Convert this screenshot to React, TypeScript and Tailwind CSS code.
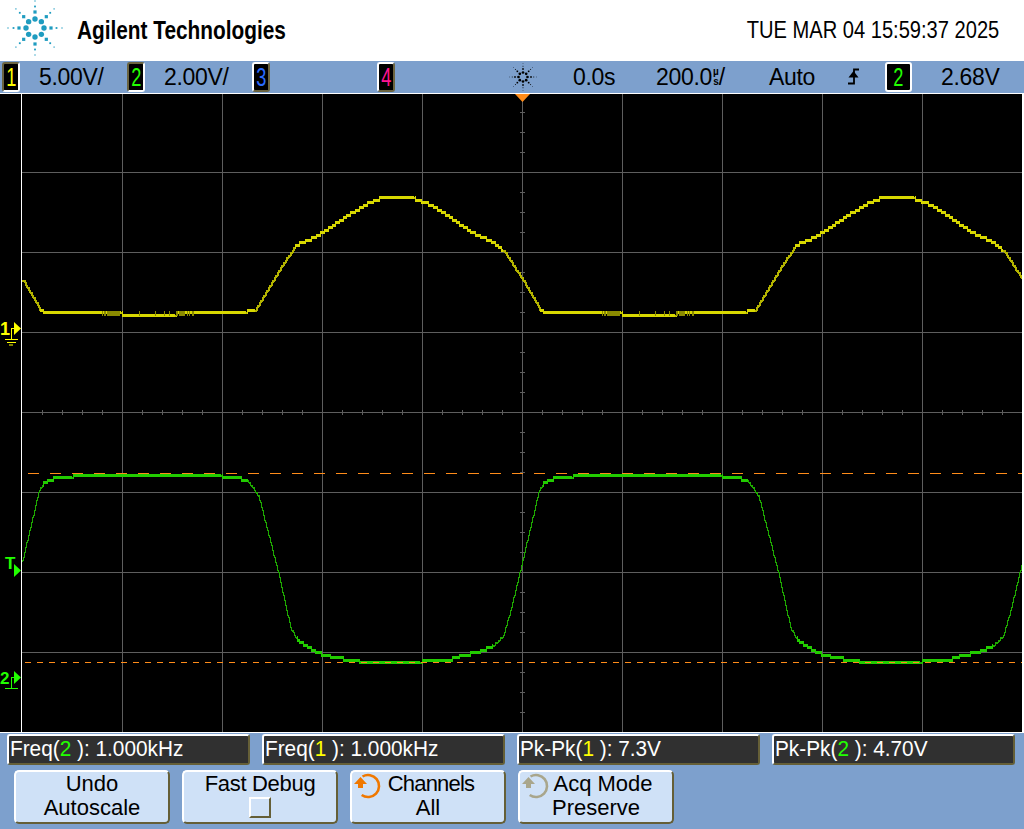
import React from "react";

// period of both traces is 500px (1 kHz at 200us/div)
const yellowPts: [number, number][] = [
  [0, 279], [18, 310], [26, 312], [99, 312], [100, 315], [153, 315], [154, 312], [224, 312], [225, 310], [233, 309],
  [258, 267], [273, 245], [291, 237], [300, 232], [325, 215], [345, 203], [360, 197], [392, 197], [393, 199], [408, 204], [428, 217],
  [448, 231], [471, 242], [481, 250], [500, 279],
];
const greenPts: [number, number][] = [
  [0, 560], [16, 492], [21, 482], [24, 481], [31, 478], [50, 476], [51, 475], [199, 475], [200, 477], [218, 478], [226, 481],
  [236, 495], [256, 573], [268, 627], [275, 640], [291, 650], [303, 655], [315, 657], [328, 660], [350, 662], [398, 662], [400, 660],
  [425, 660], [438, 655], [455, 652], [471, 645], [481, 635], [488, 610], [500, 560],
];

function traceAt(pts: [number, number][], x: number) {
  const px = ((x - 22) % 500 + 500) % 500;
  for (let i = 1; i < pts.length; i++) {
    if (px <= pts[i][0]) {
      const [x0, y0] = pts[i - 1];
      const [x1, y1] = pts[i];
      return y0 + ((y1 - y0) * (px - x0)) / (x1 - x0 || 1);
    }
  }
  return pts[0][1];
}

// the scope samples on a coarse vertical grid, hence the stair steps
function Trace({ pts, bright, dim, base, steepWidth }: { pts: [number, number][]; bright: string; dim: string; base: number; steepWidth: number }) {
  const snap = (v: number) => base + Math.round(Math.round((v - base) / 2.5) * 2.5);
  const cols = [];
  let prev = snap(traceAt(pts, 22));
  for (let x = 22; x < 1022; x++) {
    const raw = traceAt(pts, x);
    const y = snap(raw);
    const top = Math.min(prev, y);
    const h = Math.abs(prev - y);
    const steep = Math.abs(traceAt(pts, x + 1) - raw) > 0.9;
    cols.push(
      steep ? (
        <rect key={x} x={x} y={top} width={steepWidth} height={Math.max(h, 1) + 1} fill={dim} />
      ) : (
        <rect key={x} x={x} y={top - 1} width={1} height={h + 3} fill={bright} />
      )
    );
    prev = y;
  }
  return <g shapeRendering="crispEdges">{cols}</g>;
}

function GridLines() {
  const xs = [122, 222, 322, 422, 522, 622, 722, 822, 922];
  const ys = [172, 252, 332, 412, 492, 572, 652];
  const ticksX = Array.from({ length: 49 }, (_, i) => 22 + i * 20 + 20);
  const ticksY = Array.from({ length: 31 }, (_, i) => 112 + i * 20);
  return (
    <g stroke="#5e5e5e" strokeWidth={1} shapeRendering="crispEdges">
      {xs.map((x) => (
        <line key={x} x1={x + 0.5} x2={x + 0.5} y1={94} y2={732} />
      ))}
      {ys.map((y) => (
        <line key={y} x1={22} x2={1022} y1={y + 0.5} y2={y + 0.5} />
      ))}
      {ticksX.map((x) => (
        <line key={x} x1={x + 0.5} x2={x + 0.5} y1={410} y2={415} />
      ))}
      {ticksY.map((y) => (
        <line key={y} x1={520} x2={525} y1={y + 0.5} y2={y + 0.5} />
      ))}
    </g>
  );
}

function Spark({ size, color, className }: { size: number; color: string; className?: string }) {
  const dots: React.ReactNode[] = [];
  const radii = [9, 16, 21.5, 27];
  const sizes = [5.4, 3.2, 1.8, 1.2];
  [0, 45, 90, 135, 180, 225, 270, 315].forEach((a) => {
    radii.forEach((r, i) => {
      const s = sizes[i];
      const cx = 28 + r * Math.sin((a * Math.PI) / 180);
      const cy = 28 - r * Math.cos((a * Math.PI) / 180);
      dots.push(
        i === 0 ? (
          <circle key={`${a}-${i}`} cx={cx} cy={cy} r={s / 2} fill={color} />
        ) : (
          <rect key={`${a}-${i}`} x={cx - s / 2} y={cy - s / 2} width={s} height={s} fill={color} />
        )
      );
    });
  });
  return (
    <svg width={size} height={size} viewBox="0 0 56 56" className={`shrink-0 ${className ?? ""}`}>
      {dots}
    </svg>
  );
}

function RotateIcon({ color }: { color: string }) {
  return (
    <svg width={28} height={28} viewBox="0 0 28 28" className="shrink-0">
      <path d="M9.5 3.5 A11 11 0 1 1 8.7 22" fill="none" stroke={color} strokeWidth={2.6} />
      <path d="M1 11 L7.5 4 L14 11 L10 11 L10 15 L5 15 L5 11 Z" fill={color} />
    </svg>
  );
}

function ChannelBox({ n, color, pressed, wide }: { n: string; color: string; pressed?: boolean; wide?: boolean }) {
  const edge = pressed
    ? "border-t-[#6b6440] border-l-[#6b6440] border-b-white border-r-white"
    : "border-t-white border-l-white border-b-[#6b6440] border-r-[#6b6440]";
  return (
    <div
      className={`${wide ? "w-[27px] border-white" : `w-[18px] ${edge}`} h-[30px] shrink-0 rounded-[3px] border-2 bg-black flex items-center justify-center text-[26px] leading-none tracking-normal`}
      style={{ color }}
    >
      <span className="inline-block scale-x-[0.7]">{n}</span>
    </div>
  );
}

function Measure({ label, ch, chColor, value }: { label: string; ch: string; chColor: string; value: string }) {
  return (
    <div className="h-[31px] w-[243px] shrink-0 rounded-[3px] border-2 border-t-white border-l-white border-b-[#655f37] border-r-[#655f37] bg-[#303030] pl-[1px] text-[22px] leading-[25px] text-white whitespace-pre">
      <span className="inline-block origin-left scale-x-[0.945]">
        {label}(<span style={{ color: chColor }}>{ch}</span> ): {value}
      </span>
    </div>
  );
}

function SoftKey({ children, className }: { children: React.ReactNode; className?: string }) {
  return (
    <div className={`h-[54px] w-[156px] shrink-0 rounded-[5px] border-2 border-t-white border-l-white border-b-[#655f37] border-r-[#655f37] bg-[#cfe1f7] text-black text-[22px] leading-[24px] text-center ${className ?? ""}`}>
      {children}
    </div>
  );
}

export default function App() {
  return (
    <main className="w-[1024px] h-[829px] overflow-hidden bg-white" style={{ fontFamily: '"Liberation Sans", Arial, sans-serif' }}>
      {/* ================= HEADER ================= */}
      <header className="h-[61px] flex items-center pl-[7px] pr-[25px] whitespace-nowrap">
        <Spark size={56} color="#1f9cc0" className="mb-[5px]" />
        <span className="ml-[14px] inline-block origin-left scale-x-[0.816] text-[25.5px] font-bold text-black">Agilent Technologies</span>
        <span className="ml-auto inline-block origin-right scale-x-[0.855] text-[23.5px] text-black">TUE MAR 04 15:59:37 2025</span>
      </header>

      {/* ================= STATUS BAR ================= */}
      <div className="h-[32px] bg-[#7da0cd] flex items-center pl-[2px] text-[23px] text-black tracking-[-0.3px] border-b border-white box-content whitespace-nowrap">
        <ChannelBox n="1" color="#ffff00" pressed />
        <span className="ml-[19px] w-[88px]">5.00V/</span>
        <ChannelBox n="2" color="#22ff00" pressed />
        <span className="ml-[19px] w-[88px]">2.00V/</span>
        <ChannelBox n="3" color="#2a6cff" />
        <div className="w-[107px]" />
        <ChannelBox n="4" color="#ff1493" />
        <div className="ml-[114px]">
          <Spark size={28} color="#000000" />
        </div>
        <span className="ml-[36px] w-[83px]">0.0s</span>
        <span className="flex items-center w-[113px]">
          200.0
          <span className="flex flex-col items-center text-[10px] leading-[10px] font-bold ml-[1px] tracking-normal">
            <span>µ</span>
            <span>s</span>
          </span>
          /
        </span>
        <span className="w-[79px]">Auto</span>
        <svg width={11} height={18} viewBox="0 0 11 18" className="shrink-0" fill="none" stroke="#000" strokeWidth={1.8}>
          <path d="M11 1.5 H6 V15.5 H0" />
          <path d="M0.5 9.5 H10.5 L5.5 3 Z" fill="#000" stroke="none" />
        </svg>
        <div className="w-[26px]" />
        <ChannelBox n="2" color="#22ff00" wide />
        <span className="ml-[29px]">2.68V</span>
      </div>

      {/* ================= SCOPE DISPLAY ================= */}
      <div className="h-[639px] bg-black border-b border-white">
        <svg width={1024} height={638} viewBox="0 94 1024 638" className="block">
          <GridLines />
          <Trace pts={yellowPts} bright="#d8d800" dim="#b4b400" base={312} steepWidth={2} />
          <Trace pts={greenPts} bright="#22cc00" dim="#1ea800" base={662} steepWidth={1} />
          <g shapeRendering="crispEdges">
            {[102, 104, 105, 107, 108, 109, 110, 111, 112, 113, 114, 115, 116, 117, 118, 119, 139, 155, 164, 169, 176, 177, 179, 180, 181, 182, 183, 184, 187, 189, 192, 193].flatMap((x) => [
              <rect key={x} x={x} y={311} width={1} height={5} fill="#8a8a00" />,
              <rect key={x + 500} x={x + 500} y={311} width={1} height={5} fill="#8a8a00" />,
            ])}
          </g>
          <line x1={28} x2={1022} y1={473.5} y2={473.5} stroke="#ff8c1a" strokeDasharray="11 11" shapeRendering="crispEdges" />
          <line x1={25} x2={1022} y1={662.5} y2={662.5} stroke="#ff8c1a" strokeDasharray="6 6" shapeRendering="crispEdges" />
          <path d="M515 94 H530 L522.5 102 Z" fill="#ff8c1a" />

          {/* left frame and right frame */}
          <rect x={21} y={94} width={1} height={638} fill="#fff" />
          <rect x={1022} y={94} width={2} height={638} fill="#fff" />

          {/* channel 1 ground marker */}
          <g fill="#ffff00">
            <text x={0} y={335} fontSize={18} fontWeight={700} fontFamily="Liberation Sans">1</text>
            <path d="M14 322 L21 328.5 L14 335 Z" />
            <path d="M11 328 h3 v1 h-2 v10 h-1 Z M5 339 h13 v1 h-13 Z M7 342 h9 v1 h-9 Z M9 344.5 h4 v1 h-4 Z" />
          </g>

          {/* trigger marker */}
          <g fill="#22ff00">
            <text x={5} y={569} fontSize={17} fontWeight={700} fontFamily="Liberation Sans">T</text>
            <path d="M14 564 L21 570.5 L14 577 Z" />
          </g>

          {/* channel 2 ground marker */}
          <g fill="#22ff00">
            <text x={0} y={684} fontSize={17} fontWeight={700} fontFamily="Liberation Sans">2</text>
            <path d="M14 671 L21 677.5 L14 684 Z" />
            <path d="M11 677 h3 v1 h-2 v10 h-1 Z M5 688 h13 v1 h-13 Z" />
          </g>
        </svg>
      </div>

      {/* ================= SOFTKEY PANEL ================= */}
      <div className="h-[96px] bg-[#7da0cd] pt-[1px]">
        <div className="flex gap-[12px] pl-[7px]">
          <Measure label="Freq" ch="2" chColor="#22ff00" value="1.000kHz" />
          <Measure label="Freq" ch="1" chColor="#ffff00" value="1.000kHz" />
          <Measure label="Pk-Pk" ch="1" chColor="#ffff00" value="7.3V" />
          <Measure label="Pk-Pk" ch="2" chColor="#22ff00" value="4.70V" />
        </div>
        <div className="flex gap-[12px] pl-[14px] mt-[5px]">
          <SoftKey>
            Undo
            <br />
            Autoscale
          </SoftKey>
          <SoftKey>
            <span className="tracking-[-0.3px]">Fast Debug</span>
            <div className="mx-auto mt-[1px] h-[21px] w-[22px] border-2 border-t-white border-l-white border-b-[#655f37] border-r-[#655f37]" />
          </SoftKey>
          <SoftKey className="relative">
            <div className="absolute left-[1px] top-[1px]">
              <RotateIcon color="#f07800" />
            </div>
            <span className="pl-[6px] tracking-[-0.8px]">Channels</span>
            <br />
            All
          </SoftKey>
          <SoftKey className="relative">
            <div className="absolute left-[1px] top-[1px]">
              <RotateIcon color="#a9a68c" />
            </div>
            <span className="pl-[14px]">Acq Mode</span>
            <br />
            Preserve
          </SoftKey>
        </div>
      </div>
    </main>
  );
}
